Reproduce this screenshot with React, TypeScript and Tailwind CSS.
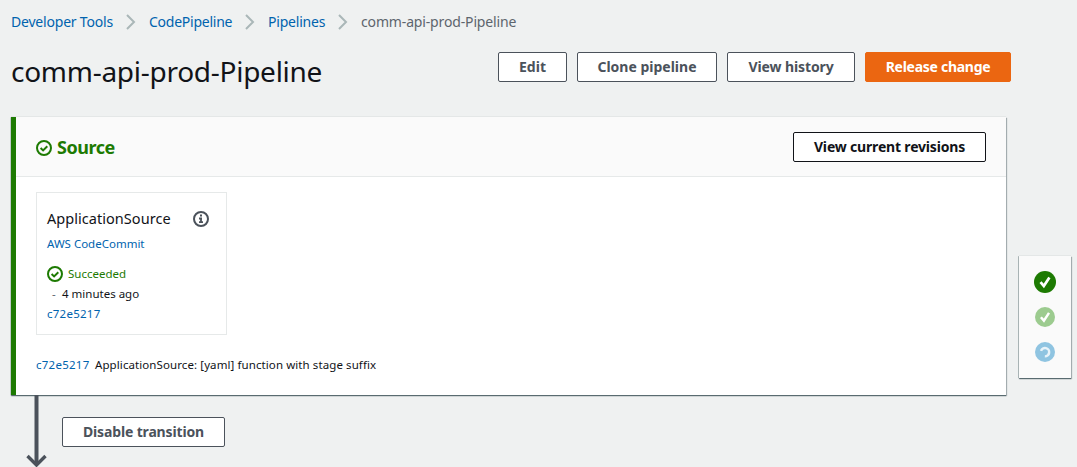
import React from "react";

function Button({ children, className }: { children: React.ReactNode; className: string }) {
  return (
    <button
      className={`flex h-[30px] shrink-0 items-center justify-center whitespace-nowrap rounded-[2px] border text-[14px] font-bold leading-[20px] ${className}`}
    >
      {children}
    </button>
  );
}

function Separator({ className }: { className: string }) {
  return (
    <svg className={`h-[16px] w-[10px] shrink-0 ${className}`} viewBox="0 0 10 16" fill="none" stroke="#aab7b8" strokeWidth="2">
      <path d="M1 1l7 7-7 7" />
    </svg>
  );
}

function CheckCircle() {
  return (
    <svg className="size-[16px] shrink-0" viewBox="0 0 16 16" fill="none" stroke="#1d7a02" strokeWidth="2">
      <circle cx="8" cy="8" r="7" />
      <path d="M4.6 8l2.5 2.4 4.2-4.2" />
    </svg>
  );
}

function InfoCircle() {
  return (
    <svg className="size-[16px] shrink-0" viewBox="0 0 16 16" fill="none" stroke="#4b525b" strokeWidth="2">
      <circle cx="8" cy="8" r="7" />
      <path d="M7 4.5h2M6 7.5h3M8 7v4M6 11.2h4" strokeWidth="1.8" />
    </svg>
  );
}

function StatusDot({ color, busy, large }: { color: string; busy?: boolean; large?: boolean }) {
  return (
    <svg className={large ? "size-[22px]" : "size-[20px]"} viewBox="0 0 22 22" fill="none" stroke="#fff">
      <circle cx="11" cy="11" r="11" fill={color} stroke="none" />
      {busy ? (
        <path d="M6.6 9.8a4.6 4.6 0 1 1 4.2 6" strokeWidth="2.7" strokeOpacity=".8" />
      ) : (
        <path d="M6.5 11.2l3.3 3.8 5.6-8.6" strokeWidth="2.7" />
      )}
    </svg>
  );
}

export default function App() {
  return (
    <div className="flex h-[467px] w-[1077px] overflow-hidden bg-[#eff1f1] pl-[11px] font-['Noto_Sans','Open_Sans',sans-serif] text-[#111318]">
      <main className="flex w-[996px] shrink-0 flex-col">
        <nav className="flex h-[42px] items-center whitespace-nowrap pt-[2px] text-[14px] leading-[20px] text-[#0063ae]">
          <a className="w-[102px] tracking-[-0.2px]">Developer Tools</a>
          <Separator className="ml-[13px]" />
          <a className="ml-[13px] w-[83px] tracking-[-0.25px]">CodePipeline</a>
          <Separator className="ml-[13px]" />
          <a className="ml-[13px] w-[57px] tracking-[-0.2px]">Pipelines</a>
          <Separator className="ml-[13px]" />
          <span className="ml-[13px] tracking-[-0.15px] text-[#5d656d]">comm-api-prod-Pipeline</span>
        </nav>

        <header className="-mr-[4px] flex h-[75px] items-start justify-between">
          <h1 className="mt-[9px] whitespace-nowrap text-[28px] leading-[40px] tracking-[-0.27px]">comm-api-prod-Pipeline</h1>
          <div className="mt-[10px] flex gap-[10px]">
            <Button className="w-[69px] border-[#4b525b] bg-white text-[#4b525b]">Edit</Button>
            <Button className="w-[140px] border-[#4b525b] bg-white text-[#4b525b]">Clone pipeline</Button>
            <Button className="w-[128px] border-[#4b525b] bg-white tracking-[-0.1px] text-[#4b525b]">View history</Button>
            <Button className="w-[146px] border-[#eb6611] bg-[#eb6611] tracking-[-0.28px] text-white">Release change</Button>
          </div>
        </header>

        <section className="flex h-[278px] w-[995px] shrink-0 flex-col border-l-[5px] border-[#1d7a02] bg-white shadow-[0_1px_1px_0_rgba(0,28,36,0.5),1px_1px_1px_0_rgba(0,28,36,0.25),0_-1px_0_0_#e4e7e7,-1px_0_0_0_#d5dbdb]">
          <div className="flex h-[60px] shrink-0 items-center justify-between border-b border-[#e6e9e9] bg-[#fafafa] pl-[20px] pr-[20px]">
            <div className="flex items-center gap-[5px] pt-[2px]">
              <CheckCircle />
              <h2 className="-mt-[2px] text-[18px] font-bold leading-[22px] tracking-[-0.45px] text-[#1d7a02]">Source</h2>
            </div>
            <Button className="w-[193px] border-[#111318] bg-white tracking-[-0.18px] text-[#111318]">View current revisions</Button>
          </div>
          <div className="pl-[20px] pt-[15px]">
            <article className="flex h-[143px] w-[191px] flex-col border border-[#e6e9e9] px-[10px] pt-[16px] text-[11.5px] leading-[20px]">
              <div className="flex h-[20px] items-center justify-between pr-[7px]">
                <h3 className="-mt-[2px] text-[14.5px] tracking-[0.04px]">ApplicationSource</h3>
                <InfoCircle />
              </div>
              <a className="mt-[5px] text-[#0063ae]">AWS CodeCommit</a>
              <div className="mt-[10px] flex items-center gap-[5px] text-[#1d7a02]">
                <CheckCircle />
                <span>Succeeded</span>
              </div>
              <div className="flex whitespace-nowrap pl-[5px]">
                <span className="w-[10px] text-[#5d656d]">-</span>
                <span>4 minutes ago</span>
              </div>
              <a className="tracking-[0.25px] text-[#0063ae]">c72e5217</a>
            </article>
            <p className="mt-[20px] flex whitespace-nowrap text-[11.5px] leading-[20px]">
              <a className="w-[59px] tracking-[0.25px] text-[#0063ae]">c72e5217</a>
              <span className="tracking-[0.09px]">ApplicationSource: [yaml] function with stage suffix</span>
            </p>
          </div>
        </section>

        <div className="flex shrink-0 pl-[15px]">
          <svg className="h-[72px] w-[21px] shrink-0" viewBox="0 0 21 72" fill="none" stroke="#4b525b">
            <path d="M10.5 0v70" strokeWidth="4" />
            <path d="M1.5 61l9 9 9-9" strokeWidth="3.4" />
          </svg>
          <Button className="ml-[15px] mt-[22px] w-[163px] border-[#4b525b] bg-white tracking-[-0.15px] text-[#4b525b]">Disable transition</Button>
        </div>
      </main>

      <aside className="ml-[12px] mt-[256px] flex h-[122px] w-[52px] shrink-0 flex-col items-center bg-[#fafafa] pt-[15px] shadow-[0_1px_1px_0_rgba(0,28,36,0.5),1px_1px_1px_0_rgba(0,28,36,0.25),0_-1px_0_0_#e4e7e7,-1px_0_0_0_#b8c2c2]">
        <StatusDot color="#1d7a02" large />
        <div className="mt-[14px] flex flex-col gap-[15px]">
          <StatusDot color="#9ccb8f" />
          <StatusDot color="#8fc4e1" busy />
        </div>
      </aside>
    </div>
  );
}
